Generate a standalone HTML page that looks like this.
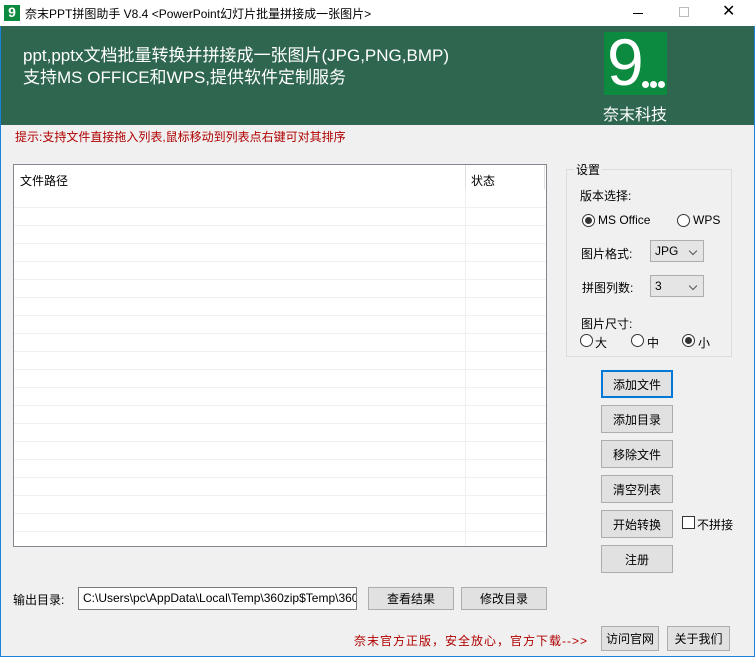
<!DOCTYPE html>
<html><head><meta charset="utf-8"><style>
*{margin:0;padding:0;box-sizing:border-box}
body{width:755px;height:657px;overflow:hidden;background:#f0f0f0;font-family:"Liberation Sans","Noto Sans CJK SC",sans-serif;font-size:12px;color:#000;position:relative}
.a{position:absolute}
.btn{position:absolute;background:#e1e1e1;border:1px solid #adadad;text-align:center;font-size:12px;display:flex;align-items:center;justify-content:center}
.radio{position:absolute;width:13px;height:13px;border:1px solid #333;border-radius:50%;background:#fff}
.radio.on::after{content:"";position:absolute;left:2px;top:2px;width:7px;height:7px;border-radius:50%;background:#333}
.sel{position:absolute;background:#e5e5e5;border:1px solid #adadad;font-size:12px;padding-left:4px;display:flex;align-items:center}
.sel::after{content:"";position:absolute;right:7px;top:7px;width:5px;height:5px;border-right:1px solid #555;border-bottom:1px solid #555;transform:rotate(45deg)}
</style></head><body>
<div class="a" style="left:0;top:0;width:755px;height:657px;border:1px solid #1a82d8;border-top:none"></div>
<div class="a" style="left:0;top:0;width:755px;height:26px;background:#fff"></div>
<div class="a" style="left:4px;top:5px;width:16px;height:16px;background:#0c8a3f;color:#fff;font-size:14px;line-height:15px;font-weight:bold;text-align:center">9</div>
<div class="a" style="left:25px;top:5px;font-size:12px">奈末PPT拼图助手 V8.4 &lt;PowerPoint幻灯片批量拼接成一张图片&gt;</div>
<div class="a" style="left:633px;top:13px;width:10px;height:1px;background:#000"></div>
<div class="a" style="left:679px;top:7px;width:10px;height:10px;border:1px solid #bbb"></div>
<div class="a" style="left:722px;top:2px;font-size:16px;line-height:20px">✕</div>
<div class="a" style="left:1px;top:26px;width:753px;height:99px;background:#2e6650"></div>
<div class="a" style="left:23px;top:45px;color:#fff;font-size:17px;line-height:22px">ppt,pptx文档批量转换并拼接成一张图片(JPG,PNG,BMP)<br>支持MS OFFICE和WPS,提供软件定制服务</div>
<div class="a" style="left:604px;top:32px;width:63px;height:63px;background:#0c8a3f;overflow:hidden">
<div class="a" style="left:3px;top:-10px;color:#fff;font-size:66px;line-height:80px;font-family:'Liberation Sans',sans-serif">9</div>
<div class="a" style="left:38px;top:49px;width:7px;height:7px;border-radius:50%;background:#fff"></div>
<div class="a" style="left:46px;top:49px;width:7px;height:7px;border-radius:50%;background:#fff"></div>
<div class="a" style="left:54px;top:49px;width:7px;height:7px;border-radius:50%;background:#fff"></div>
</div>
<div class="a" style="left:603px;top:101px;color:#fff;font-size:16px">奈末科技</div>
<div class="a" style="left:15px;top:128px;color:#b00000;font-size:12px">提示:支持文件直接拖入列表,鼠标移动到列表点右键可对其排序</div>
<div class="a" style="left:13px;top:164px;width:534px;height:383px;border:1px solid #828790;background:#fff;overflow:hidden">
<div class="a" style="left:0;top:42px;width:532px;height:340px;background:repeating-linear-gradient(to bottom,#f0f0f0 0,#f0f0f0 1px,transparent 1px,transparent 18px)"></div>
<div class="a" style="left:451px;top:0;width:1px;height:383px;background:#f0f0f0"></div>
<div class="a" style="left:451px;top:0;width:1px;height:24px;background:#e0e0e0"></div>
<div class="a" style="left:530px;top:0;width:1px;height:24px;background:#e0e0e0"></div>
<div class="a" style="left:6px;top:7px">文件路径</div>
<div class="a" style="left:457px;top:7px">状态</div>
</div>
<div class="a" style="left:566px;top:169px;width:166px;height:188px;border:1px solid #dcdcdc"></div>
<div class="a" style="left:574px;top:161px;background:#f0f0f0;padding:0 2px">设置</div>
<div class="a" style="left:580px;top:187px">版本选择:</div>
<div class="radio on" style="left:582px;top:214px"></div><div class="a" style="left:598px;top:213px">MS Office</div>
<div class="radio" style="left:677px;top:214px"></div><div class="a" style="left:693px;top:213px">WPS</div>
<div class="a" style="left:581px;top:245px">图片格式:</div>
<div class="sel" style="left:650px;top:240px;width:54px;height:22px">JPG</div>
<div class="a" style="left:582px;top:279px">拼图列数:</div>
<div class="sel" style="left:650px;top:275px;width:54px;height:22px">3</div>
<div class="a" style="left:581px;top:315px">图片尺寸:</div>
<div class="radio" style="left:580px;top:334px"></div><div class="a" style="left:595px;top:334px">大</div>
<div class="radio" style="left:631px;top:334px"></div><div class="a" style="left:647px;top:334px">中</div>
<div class="radio on" style="left:682px;top:334px"></div><div class="a" style="left:698px;top:334px">小</div>
<div class="btn" style="left:601px;top:370px;width:72px;height:28px;border:2px solid #0078d7">添加文件</div>
<div class="btn" style="left:601px;top:405px;width:72px;height:28px">添加目录</div>
<div class="btn" style="left:601px;top:440px;width:72px;height:28px">移除文件</div>
<div class="btn" style="left:601px;top:475px;width:72px;height:28px">清空列表</div>
<div class="btn" style="left:601px;top:510px;width:72px;height:28px">开始转换</div>
<div class="a" style="left:682px;top:516px;width:13px;height:13px;border:1px solid #333;background:#fff"></div>
<div class="a" style="left:697px;top:516px">不拼接</div>
<div class="btn" style="left:601px;top:545px;width:72px;height:28px">注册</div>
<div class="a" style="left:13px;top:591px">输出目录:</div>
<div class="a" style="left:78px;top:587px;width:279px;height:23px;border:1px solid #7a7a7a;background:#fff;padding:3px 4px;white-space:nowrap;overflow:hidden;font-size:12px">C:\Users\pc\AppData\Local\Temp\360zip$Temp\360</div>
<div class="btn" style="left:368px;top:587px;width:86px;height:23px">查看结果</div>
<div class="btn" style="left:461px;top:587px;width:86px;height:23px">修改目录</div>
<div class="a" style="left:354px;top:632px;color:#b00000;letter-spacing:1px">奈末官方正版，安全放心，官方下载--&gt;&gt;</div>
<div class="btn" style="left:601px;top:626px;width:58px;height:25px">访问官网</div>
<div class="btn" style="left:667px;top:626px;width:63px;height:25px">关于我们</div>
</body></html>
